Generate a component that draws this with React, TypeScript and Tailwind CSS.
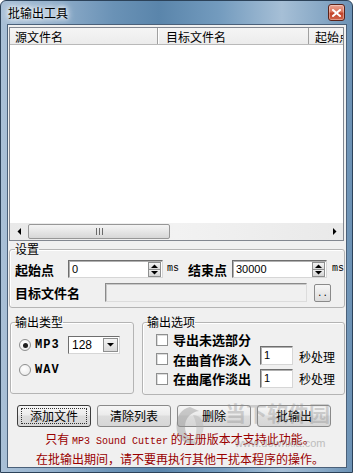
import React from "react";

function Tri({ dir }: { dir: "up" | "down" | "left" | "right" }) {
  const pts: Record<string, string> = {
    up: "0,4 3.5,0.5 7,4",
    down: "0,0 7,0 3.5,3.5",
    left: "4,0 4,7 0.5,3.5",
    right: "0,0 0,7 3.5,3.5",
  };
  const vertical = dir === "up" || dir === "down";
  return (
    <svg width={vertical ? 7 : 4} height={vertical ? 4 : 7} className="block">
      <polygon points={pts[dir]} fill="#000" />
    </svg>
  );
}

function SpinBox({ value }: { value: string }) {
  return (
    <div className="flex h-[18px] w-[95px] border border-t-[#6e6e6e] border-l-[#6e6e6e] border-r-[#d6d6d6] border-b-[#d6d6d6] bg-white shadow-[inset_1px_1px_0_#b0b0b0]">
      <span className="flex-1 pl-[3px] pt-[1px] font-['Liberation_Sans',sans-serif] text-[11px] leading-[14px]">{value}</span>
      <div className="mr-[1px] mt-[1px] flex w-[13px] flex-col">
        <div className="flex h-[8px] items-center justify-center border border-[#8e8f8f] bg-[linear-gradient(#f4f4f4,#d9d9d9)]">
          <Tri dir="up" />
        </div>
        <div className="flex h-[7px] items-center justify-center border border-t-0 border-[#8e8f8f] bg-[linear-gradient(#eeeeee,#d4d4d4)]">
          <Tri dir="down" />
        </div>
      </div>
    </div>
  );
}

function SmallInput({ value }: { value: string }) {
  return (
    <div className="h-[19px] w-[33px] border border-t-[#6e6e6e] border-l-[#6e6e6e] border-r-[#d6d6d6] border-b-[#d6d6d6] bg-white pl-[3px] pt-[1px] font-['Liberation_Sans',sans-serif] text-[11px] leading-[15px] shadow-[inset_1px_1px_0_#b0b0b0]">
      {value}
    </div>
  );
}

function CheckBox() {
  return <div className="h-[12px] w-[12px] shrink-0 border border-[#8e8f8f] bg-white shadow-[inset_1px_1px_0_#dcdcdc]" />;
}

function Radio({ checked }: { checked?: boolean }) {
  return (
    <div className="flex h-[12px] w-[12px] shrink-0 items-center justify-center rounded-full border border-[#8e8f8f] bg-[radial-gradient(circle_at_40%_35%,#ffffff,#e6e6e6)]">
      {checked && <div className="h-[5px] w-[5px] rounded-full bg-[#1e1e1e]" />}
    </div>
  );
}

function Btn({ children, focused }: { children: React.ReactNode; focused?: boolean }) {
  return (
    <div
      className={
        "flex h-[22px] w-[74px] items-center justify-center rounded-[3px] border bg-[linear-gradient(#f6f6f6_0%,#ebebeb_45%,#dddddd_50%,#d6d6d6_100%)] text-[12px] leading-[12px] " +
        (focused ? "border-[#3c3c3c]" : "border-[#8a8a8a]")
      }
    >
      {focused ? (
        <div className="flex h-[16px] w-[66px] items-center justify-center border border-dotted border-[#333]">{children}</div>
      ) : (
        children
      )}
    </div>
  );
}

export default function App() {
  const red = "text-[#990000]";
  return (
    <div className="relative flex h-[473px] w-[353px] flex-col overflow-hidden rounded-t-[6px] border border-[#2c4259] bg-[linear-gradient(90deg,#a9c0d7_0%,#93b0cc_14%,#6a92b6_32%,#5a85ab_45%,#739bbe_62%,#a6bfd6_80%,#86a7c5_92%,#6c92b5_100%)] font-['Noto_Sans_CJK_SC',sans-serif] text-black">
      {/* title bar */}
      <div className="flex h-[23px] shrink-0 items-center justify-between pl-[7px] pr-[7px]">
        <span className="text-[12px] leading-[12px] [text-shadow:0_0_4px_#fff,0_0_7px_#fff,0_0_10px_#fff]">批输出工具</span>
        <div className="flex h-[17px] w-[17px] items-center justify-center rounded-[3px] border border-[#5b2218] bg-[linear-gradient(#eba594_0%,#d9755c_45%,#c2432a_55%,#d0654a_100%)] shadow-[inset_0_0_0_1px_rgba(255,255,255,0.35)]">
          <svg width="9" height="8" viewBox="0 0 9 8">
            <path d="M1 1 L8 7 M8 1 L1 7" stroke="#fff" strokeWidth="2" strokeLinecap="square" />
          </svg>
        </div>
      </div>

      {/* client area */}
      <div className="mb-[6px] ml-[6px] mr-[5px] flex flex-1 flex-col border border-[#4a6079] bg-[#f0f0f0]">
        {/* list view */}
        <div className="ml-[1px] mt-[2px] flex h-[214px] w-[335px] flex-col border border-[#828790] bg-white">
          <div className="flex h-[17px] shrink-0 border-b border-[#b9b9b9] bg-[linear-gradient(#f5f5f5,#ececec)] text-[12px] leading-[16px]">
            <div className="w-[148px] shrink-0 border-r border-[#a0a0a0] pl-[5px] pt-[1px] shadow-[1px_0_0_#fff]">源文件名</div>
            <div className="w-[151px] shrink-0 border-r border-[#a0a0a0] pl-[8px] pt-[1px]">目标文件名</div>
            <div className="flex-1 overflow-hidden whitespace-nowrap pl-[6px] pt-[1px]">起始点</div>
          </div>
          <div className="flex-1" />
          <div className="flex h-[17px] shrink-0 items-center bg-[linear-gradient(90deg,#e9e9e9,#f2f2f2,#e9e9e9)]">
            <div className="flex w-[17px] justify-center">
              <Tri dir="left" />
            </div>
            <div className="ml-[1px] flex h-[15px] w-[142px] items-center justify-center rounded-[2px] border border-[#979797] bg-[linear-gradient(#f4f4f4,#e6e6e6_50%,#d7d7d7)]">
              <svg width="7" height="7">
                <path d="M0.5 0 V7 M3.5 0 V7 M6.5 0 V7" stroke="#6a6a6a" strokeWidth="1" />
              </svg>
            </div>
            <div className="flex-1" />
            <div className="flex w-[17px] justify-center">
              <Tri dir="right" />
            </div>
          </div>
        </div>

        {/* 设置 group */}
        <fieldset className="ml-[1px] mt-[2px] w-[336px] rounded-[3px] border border-[#b4b4b4] pb-[5px] pl-[5px] pt-[5px] shadow-[inset_1px_1px_0_#fff]">
          <legend className="text-[12px] leading-[12px]">设置</legend>
          <div className="flex h-[18px] items-center">
            <span className="w-[53px] text-[13px] font-bold leading-[13px]">起始点</span>
            <SpinBox value="0" />
            <span className="ml-[4px] w-[21px] font-['Liberation_Mono',monospace] text-[10px] leading-[10px]">ms</span>
            <span className="w-[44px] text-[13px] font-bold leading-[13px]">结束点</span>
            <SpinBox value="30000" />
            <span className="ml-[5px] font-['Liberation_Mono',monospace] text-[10px] leading-[10px]">ms</span>
          </div>
          <div className="mt-[5px] flex h-[19px] items-center">
            <span className="w-[90px] text-[13px] font-bold leading-[13px]">目标文件名</span>
            <div className="h-[19px] w-[202px] border border-t-[#8a8a8a] border-l-[#8a8a8a] border-r-[#dcdcdc] border-b-[#dcdcdc] bg-[#f0f0f0] shadow-[inset_1px_1px_0_#c8c8c8]" />
            <div className="ml-[7px] flex h-[18px] w-[17px] items-end justify-center rounded-[2px] border border-[#8a8a8a] bg-[linear-gradient(#f6f6f6,#dcdcdc)] pb-[2px] font-['Liberation_Mono',monospace] text-[9px] leading-[9px]">
              ..
            </div>
          </div>
        </fieldset>

        {/* output groups */}
        <div className="mt-[8px] flex items-start">
          <fieldset className="ml-[2px] h-[78px] w-[124px] rounded-[3px] border border-[#b4b4b4] pl-[4px] pt-[8px] shadow-[inset_1px_1px_0_#fff]">
            <legend className="text-[12px] leading-[12px]">输出类型</legend>
            <div className="flex h-[18px] items-center">
              <div className="ml-[4px]">
                <Radio checked />
              </div>
              <span className="ml-[4px] w-[29px] font-['Liberation_Mono',monospace] text-[12px] font-bold leading-[12px] tracking-[1px]">MP3</span>
              <div className="ml-[4px] flex h-[18px] w-[52px] border border-t-[#6e6e6e] border-l-[#6e6e6e] border-r-[#d6d6d6] border-b-[#d6d6d6] bg-white">
                <span className="flex-1 pl-[3px] font-['Liberation_Sans',sans-serif] text-[12px] leading-[16px]">128</span>
                <div className="m-[1px] flex w-[15px] items-center justify-center border border-[#8e8f8f] bg-[linear-gradient(#f4f4f4,#d9d9d9)]">
                  <Tri dir="down" />
                </div>
              </div>
            </div>
            <div className="mt-[7px] flex h-[18px] items-center">
              <div className="ml-[4px]">
                <Radio />
              </div>
              <span className="ml-[4px] font-['Liberation_Mono',monospace] text-[12px] font-bold leading-[12px] tracking-[1px]">WAV</span>
            </div>
          </fieldset>

          <fieldset className="ml-[8px] h-[79px] w-[203px] rounded-[3px] border border-[#b4b4b4] pl-[4px] pt-[5px] shadow-[inset_1px_1px_0_#fff]">
            <legend className="text-[12px] leading-[12px]">输出选项</legend>
            <div className="flex h-[13px] items-center">
              <div className="ml-[9px]">
                <CheckBox />
              </div>
              <span className="ml-[5px] text-[13px] font-bold leading-[13px]">导出未选部分</span>
            </div>
            <div className="flex h-[20px] items-end">
              <div className="mb-[1px] ml-[9px]">
                <CheckBox />
              </div>
              <span className="ml-[5px] w-[87px] text-[13px] font-bold leading-[13px]">在曲首作淡入</span>
              <div className="self-start">
                <SmallInput value="1" />
              </div>
              <span className="mb-[3px] ml-[6px] text-[12px] leading-[12px]">秒处理</span>
            </div>
            <div className="mt-[3px] flex h-[19px] items-center">
              <div className="ml-[9px]">
                <CheckBox />
              </div>
              <span className="ml-[5px] w-[87px] text-[13px] font-bold leading-[13px]">在曲尾作淡出</span>
              <SmallInput value="1" />
              <span className="ml-[6px] text-[12px] leading-[12px]">秒处理</span>
            </div>
          </fieldset>
        </div>

        {/* buttons */}
        <div className="ml-[9px] mt-[10px] flex gap-[6px]">
          <Btn focused>添加文件</Btn>
          <Btn>清除列表</Btn>
          <Btn>删除</Btn>
          <Btn>批输出</Btn>
        </div>

        {/* notes */}
        <div className={"mt-[3px] text-center text-[12px] leading-[17px] " + red}>
          <div className="pl-[6px]">
            只有 <span className="font-['Liberation_Mono',monospace] text-[10px]">MP3 Sound Cutter</span> 的注册版本才支持此功能。
          </div>
          <div className="pl-[6px]">在批输出期间，请不要再执行其他干扰本程序的操作。</div>
        </div>
      </div>

      {/* watermark overlay */}
      <div className="pointer-events-none absolute left-[172px] top-[396px] h-[52px] w-[160px]">
        <svg width="34" height="50" viewBox="0 0 34 50" className="absolute left-0 top-[4px] opacity-40">
          <path d="M17 6 C6 8 2 20 4 30 C6 40 16 46 26 42 C18 40 12 34 12 26 C12 17 18 11 26 10 Z" fill="#8d8d8d" />
          <path d="M20 14 C28 14 32 22 30 30 C28 36 24 40 20 41 C24 34 25 24 20 14 Z" fill="#b0b0b0" />
        </svg>
        <div className="absolute left-[52px] top-[3px] whitespace-nowrap text-[21px] font-bold leading-[24px] text-[#8a8a8a] opacity-35">当下软件园</div>
        <div className="absolute left-[62px] top-[40px] whitespace-nowrap font-['Liberation_Sans',sans-serif] text-[11px] leading-[12px] text-[#8a8a8a] opacity-50">www.downxia.com</div>
      </div>
    </div>
  );
}
